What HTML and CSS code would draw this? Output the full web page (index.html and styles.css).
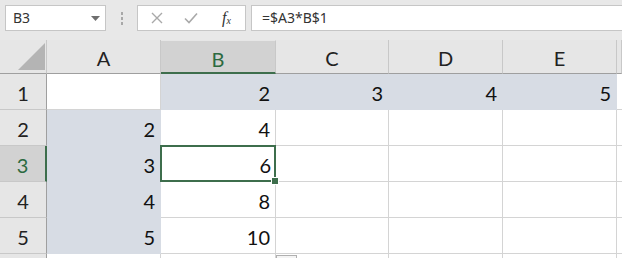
FILE: index.html
```html
<!DOCTYPE html>
<html>
	<head>
		<title>Sheet</title>
		<link rel="stylesheet" href="styles.css">
	</head>
	<body>
	<div class="toolbar">
		<div class="namebox">
			<span>B3</span>
			<svg class="drop" width="9" height="5" viewBox="0 0 9 5"><path d="M0 0 H9 L4.5 5 Z" fill="#6f6f6f"/></svg>
		</div>
		<div class="grip"><i></i><i></i><i></i></div>
		<div class="fxbox">
			<svg width="12" height="12" viewBox="0 0 12 12"><path d="M1 1 L11 11 M11 1 L1 11" stroke="#a9a9a9" stroke-width="1.4" fill="none"/></svg>
			<svg width="14" height="12" viewBox="0 0 14 12"><path d="M1 6.5 L5 10.5 L13 1.5" stroke="#a9a9a9" stroke-width="1.6" fill="none"/></svg>
			<span class="fx"><i>f</i><sub>x</sub></span>
		</div>
		<div class="formula">=$A3*B$1</div>
	</div>

	<div class="sheet">
		<div class="corner"><span class="tri"></span></div>
		<div class="colhead">A</div>
		<div class="colhead sel">B</div>
		<div class="colhead">C</div>
		<div class="colhead">D</div>
		<div class="colhead">E</div>
		<div class="colhead"></div>

		<div class="rowhead">1</div>
		<div class="cell"></div>
		<div class="cell hl">2</div>
		<div class="cell hl">3</div>
		<div class="cell hl">4</div>
		<div class="cell hl">5</div>
		<div class="cell"></div>

		<div class="rowhead">2</div>
		<div class="cell hl">2</div>
		<div class="cell">4</div>
		<div class="cell"></div>
		<div class="cell"></div>
		<div class="cell"></div>
		<div class="cell"></div>

		<div class="rowhead sel">3</div>
		<div class="cell hl">3</div>
		<div class="cell active">6</div>
		<div class="cell"></div>
		<div class="cell"></div>
		<div class="cell"></div>
		<div class="cell"></div>

		<div class="rowhead">4</div>
		<div class="cell hl">4</div>
		<div class="cell">8</div>
		<div class="cell"></div>
		<div class="cell"></div>
		<div class="cell"></div>
		<div class="cell"></div>

		<div class="rowhead">5</div>
		<div class="cell hl">5</div>
		<div class="cell">10</div>
		<div class="cell"></div>
		<div class="cell"></div>
		<div class="cell"></div>
		<div class="cell"></div>

		<div class="rowhead last"></div>
		<div class="cell last"></div>
		<div class="cell last"></div>
		<div class="cell last paste"></div>
		<div class="cell last"></div>
		<div class="cell last"></div>
		<div class="cell last"></div>
	</div>
	</body>
</html>
```

FILE: styles.css
```css
html,
body {
  height: 100%;
}
body {
  margin: 0;
  background: #fff;
  font-family: "Lato", "Open Sans", sans-serif;
  overflow: hidden;
}
.toolbar {
  height: 40px;
  background: #e8e8e8;
  display: flex;
  align-items: flex-start;
  padding: 5px 0 0 5px;
  box-sizing: border-box;
  font-family: "Noto Sans", sans-serif;
  font-size: 14px;
  color: #333;
}
.namebox {
  width: 101px;
  height: 26px;
  box-sizing: border-box;
  background: #fff;
  border: 1px solid #c6c6c6;
  display: flex;
  align-items: center;
  justify-content: space-between;
  padding: 0 5px 1px 7px;
}
.drop {
  margin-top: 1px;
}
.grip {
  width: 31px;
  height: 26px;
  display: flex;
  flex-direction: column;
  align-items: center;
  justify-content: center;
  gap: 2px;
}
.grip i {
  width: 2px;
  height: 3px;
  background: #a8a8a8;
}
.fxbox {
  width: 109px;
  height: 26px;
  box-sizing: border-box;
  background: #fff;
  border: 1px solid #c6c6c6;
  display: flex;
  align-items: center;
  padding: 0 0 0 13px;
  gap: 21px;
}
.fx {
  font-family: "Liberation Serif", serif;
  font-size: 16px;
  color: #333;
  margin-left: 3px;
}
.fx sub {
  font-size: 10px;
  font-style: italic;
  vertical-align: -1px;
}
.formula {
  flex: 1;
  min-width: 0;
  height: 26px;
  margin-left: 5px;
  box-sizing: border-box;
  background: #fff;
  border: 1px solid #c6c6c6;
  border-right: 0;
  padding: 2px 0 0 10px;
}
.sheet {
  display: grid;
  grid-template-columns: 47px 114px 115px 113px 114px 114px 5px;
  grid-template-rows: 34px repeat(5, 36px) 4px;
  font-size: 20px;
  color: #111;
}
.sheet > div {
  box-sizing: border-box;
  display: flex;
}
.corner {
  background: #e6e6e6;
  border-right: 1px solid #c8c8c8;
  border-bottom: 1px solid #9f9f9f;
  position: relative;
}
.tri {
  position: absolute;
  left: 18px;
  bottom: 3px;
  width: 27px;
  height: 27px;
  background: #b4b4b4;
  clip-path: polygon(100% 0, 100% 100%, 0 100%);
}
.colhead {
  background: #e6e6e6;
  border-right: 1px solid #c8c8c8;
  border-bottom: 1px solid #9f9f9f;
  justify-content: center;
  align-items: center;
  padding-top: 3px;
  color: #222;
}
.colhead.sel {
  background: #d2d2d2;
  color: #2c6a40;
  border-bottom: 2px solid #3d6e4c;
  border-top: 1px solid #e6e6e6;
  padding-top: 4px;
}
.rowhead {
  background: #e6e6e6;
  border-right: 1px solid #9f9f9f;
  border-bottom: 1px solid #c8c8c8;
  justify-content: center;
  align-items: center;
  padding-top: 2px;
  color: #222;
}
.rowhead.sel {
  background: #d2d2d2;
  color: #2c6a40;
  border-right: 2px solid #3d6e4c;
}
.cell {
  background: #fff;
  border-right: 1px solid #d4d4d4;
  border-bottom: 1px solid #d4d4d4;
  justify-content: flex-end;
  align-items: center;
  padding: 3px 5px 0 0;
}
.sheet > .last {
  border-bottom: 0;
}
.cell.hl {
  background: #d7dce4;
  border-color: #d7dce4;
}
.cell.active {
  border: 2px solid #3d6e4c;
  margin: -1px 0 0 -1px;
  padding: 2px 3px 0 0;
  position: relative;
}
.cell.active::after {
  content: "";
  position: absolute;
  right: -5px;
  bottom: -5px;
  width: 6px;
  height: 6px;
  background: #3d6e4c;
  border: 1px solid #fff;
}
.cell.paste {
  position: relative;
}
.cell.paste::before {
  content: "";
  position: absolute;
  left: 0;
  top: 1px;
  width: 19px;
  height: 4px;
  border: 1px solid #b0b0b0;
  border-bottom: 0;
  background: #f4f4f4;
}
```
